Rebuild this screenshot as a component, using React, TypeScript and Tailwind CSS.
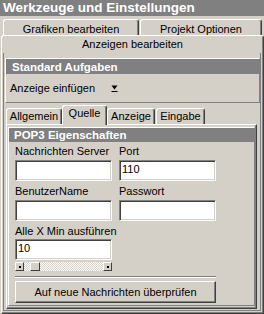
import React from "react";

const raisedTab =
  "bg-[#d4d0c8] border-t border-l border-r border-t-white border-l-white border-r-[#404040] shadow-[inset_-1px_0_#808080] rounded-t-[3px] text-center whitespace-nowrap";

const sunken =
  "bg-white border border-t-[#808080] border-l-[#808080] border-b-white border-r-white shadow-[inset_1px_1px_#404040,inset_-1px_-1px_#d4d0c8]";

const raisedBtn =
  "bg-[#d4d0c8] border border-t-white border-l-white border-b-[#404040] border-r-[#404040] shadow-[inset_-1px_-1px_#808080]";

const checker =
  "bg-[repeating-conic-gradient(#ffffff_0_25%,#d4d0c8_0_50%)] bg-[length:2px_2px]";

function Input({ value }: { value?: string }) {
  return (
    <div className={`${sunken} h-[21px] w-[97px] pl-[2px] leading-[17px] whitespace-nowrap`}>
      {value}
    </div>
  );
}

export default function App() {
  return (
    <div className="w-[264px] h-[314px] overflow-hidden bg-[#d4d0c8] flex flex-col font-['Liberation_Sans',Arial,sans-serif] text-[11px] text-black">
      {/* Title */}
      <div className="h-[16px] shrink-0 bg-[#808080] text-white font-bold text-[13.5px] leading-[16px] pl-[3px] whitespace-nowrap overflow-hidden">
        Werkzeuge und Einstellungen
      </div>

      {/* Tab row 1 */}
      <div className="h-[19px] shrink-0 flex items-end pl-[3px] gap-[1px]">
        <div className={`${raisedTab} w-[136px] h-[16px] pt-[2px] leading-[15px]`}>Grafiken bearbeiten</div>
        <div className={`${raisedTab} w-[122px] h-[16px] pt-[2px] leading-[15px]`}>Projekt Optionen</div>
      </div>

      {/* Outer panel (selected tab row 2) */}
      <div className="ml-[1px] w-[263px] h-[279px] shrink-0 flex flex-col border border-t-white border-l-white border-r-[#404040] border-b-[#404040] shadow-[inset_-1px_-1px_#808080] rounded-t-[3px]">
        <div className="h-[17px] shrink-0 pt-[1px] leading-[15px] text-center whitespace-nowrap">
          Anzeigen bearbeiten
        </div>

        {/* inner frame */}
        <div className="ml-[1px] w-[258px] h-[258px] shrink-0 flex flex-col border-l border-r border-b border-[#808080]">
          {/* Standard Aufgaben */}
          <div className="mt-[5px] ml-[1px] w-[255px] h-[45px] shrink-0 flex flex-col border border-t-white border-l-white border-r-[#808080] border-b-[#808080]">
            <div className="h-[15px] shrink-0 bg-[#808080] text-white font-bold text-[11.5px] leading-[17px] pl-[6px] whitespace-nowrap overflow-hidden">
              Standard Aufgaben
            </div>
            <div className="flex items-center pt-[7px] pl-[4px] leading-[14px] whitespace-nowrap">
              <span>Anzeige einfügen</span>
              <svg className="ml-[16px]" width="7" height="9" viewBox="0 0 7 9">
                <path d="M0.5 1.5h6L3.5 5.5z" fill="#000" />
                <rect x="0.5" y="7" width="6" height="1" fill="#000" />
              </svg>
            </div>
          </div>

          {/* Sub tab control */}
          <div className="mt-[2px] ml-[2px] w-[251px] shrink-0 flex flex-col">
            <div className="h-[19px] flex items-end">
              <div className={`${raisedTab} w-[56px] h-[16px] leading-[15px]`}>Allgemein</div>
              <div className={`${raisedTab} relative z-10 w-[45px] h-[20px] -mb-[1px] leading-[15px]`}>Quelle</div>
              <div className={`${raisedTab} w-[48px] h-[16px] leading-[15px]`}>Anzeige</div>
              <div className={`${raisedTab} ml-[1px] w-[49px] h-[16px] leading-[15px]`}>Eingabe</div>
            </div>
            <div className="h-[185px] border border-t-white border-l-white border-r-[#404040] border-b-[#404040] shadow-[inset_-1px_-1px_#808080]">
              {/* POP3 group */}
              <div className="mt-[2px] ml-[1px] w-[247px] h-[179px] flex flex-col border border-t-white border-l-white border-r-[#808080] border-b-[#808080]">
                <div className="h-[14px] shrink-0 bg-[#808080] text-white font-bold text-[11.5px] leading-[15px] pl-[5px] whitespace-nowrap overflow-hidden">
                  POP3 Eigenschaften
                </div>
                <div className="pl-[6px] flex flex-col">
                  <div className="mt-[2px] grid grid-cols-[97px_97px] gap-x-[7px] leading-[14px] whitespace-nowrap">
                    <div>Nachrichten Server</div>
                    <div>Port</div>
                  </div>
                  <div className="mt-[2px] grid grid-cols-[97px_97px] gap-x-[7px]">
                    <Input />
                    <Input value="110" />
                  </div>
                  <div className="mt-[3px] grid grid-cols-[97px_97px] gap-x-[7px] leading-[14px] whitespace-nowrap">
                    <div>BenutzerName</div>
                    <div>Passwort</div>
                  </div>
                  <div className="mt-[2px] grid grid-cols-[97px_97px] gap-x-[7px]">
                    <Input />
                    <Input />
                  </div>
                  <div className="mt-[3px] leading-[14px] whitespace-nowrap">Alle X Min ausführen</div>
                  <div className="mt-[1px]">
                    <Input value="10" />
                  </div>
                  {/* scrollbar */}
                  <div className="mt-[2px] w-[97px] h-[9px] flex">
                    <div className={`${raisedBtn} shadow-none w-[9px] h-[9px] flex items-center justify-center`}>
                      <div className="w-[2px] h-[2px] bg-black" />
                    </div>
                    <div className="flex-1 flex">
                      <div className={`${checker} w-[6px]`} />
                      <div className={`${raisedBtn} shadow-none w-[10px] h-[9px]`} />
                      <div className={`${checker} flex-1`} />
                    </div>
                    <div className={`${raisedBtn} shadow-none w-[9px] h-[9px] flex items-center justify-center`}>
                      <div className="w-[2px] h-[2px] bg-black" />
                    </div>
                  </div>
                  {/* separator */}
                  <div className="mt-[5px] w-[201px] h-[2px] border-t border-t-[#808080] border-b border-b-white" />
                  {/* button */}
                  <div className={`${raisedBtn} mt-[3px] w-[201px] h-[22px] pt-[1px] leading-[18px] text-center whitespace-nowrap`}>
                    Auf neue Nachrichten überprüfen
                  </div>
                </div>
              </div>
            </div>
          </div>
        </div>
      </div>
    </div>
  );
}
